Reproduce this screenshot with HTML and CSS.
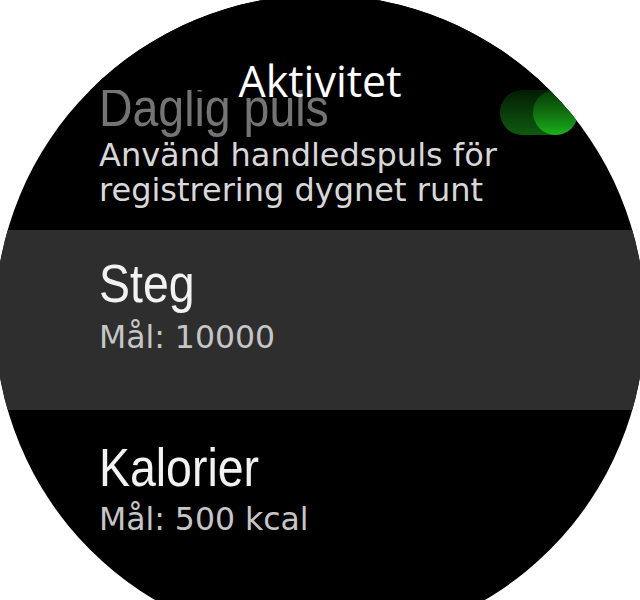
FILE: index.html
```html
<!DOCTYPE html>
<html lang="sv">
<head>
<meta charset="utf-8">
<title>Aktivitet</title>
<link rel="stylesheet" href="styles.css">
</head>
<body>
<div class="watch">
  <header class="header">
    <h1 class="title">Aktivitet</h1>
  </header>
  <ul class="list">
    <li class="item item-first">
      <div class="item-text">
        <div class="item-name item-name-faded"><span class="narrow">Daglig puls</span></div>
        <div class="item-desc">Använd handledspuls för<br>registrering dygnet runt</div>
      </div>
      <div class="toggle"><span class="toggle-knob"></span></div>
    </li>
    <li class="item item-selected">
      <div class="item-text">
        <div class="item-name"><span class="narrow">Steg</span></div>
        <div class="item-sub">Mål: 10000</div>
      </div>
    </li>
    <li class="item">
      <div class="item-text">
        <div class="item-name"><span class="narrow">Kalorier</span></div>
        <div class="item-sub">Mål: 500 kcal</div>
      </div>
    </li>
  </ul>
</div>
</body>
</html>
```

FILE: styles.css
```css
html, body {
  margin: 0;
  padding: 0;
  width: 640px;
  height: 600px;
  overflow: hidden;
  background: #ffffff;
}

.watch {
  width: 650px;
  height: 650px;
  margin: -5px 0 0 -5px;
  border-radius: 50%;
  background: #000000;
  overflow: hidden;
}

.header {
  position: relative;
  z-index: 2;
  height: 95px;
  background: #000000;
}

.title {
  margin: 0;
  padding-top: 64px;
  font-family: "Open Sans", "Noto Sans", sans-serif;
  font-weight: 400;
  font-size: 43px;
  line-height: 43px;
  color: #ffffff;
  text-align: center;
}

.list {
  list-style: none;
  margin: -40px 0 0 0;
  padding: 0;
}

.item {
  display: flex;
  align-items: flex-start;
  height: 180px;
  box-sizing: border-box;
  padding: 30px 0 0 104px;
}

.item-selected {
  background: #2e2e2e;
  padding-top: 26px;
}

.item-text {
  flex: 1;
}

.item-name {
  font-family: "Liberation Sans", Arial, sans-serif;
  font-size: 54px;
  line-height: 54px;
  color: #f2f2f2;
  white-space: nowrap;
}

.narrow {
  display: inline-block;
  transform: scaleX(0.86);
  transform-origin: left center;
}

.item-name-faded {
  color: #747474;
}

.item-desc {
  margin-top: 4px;
  font-family: "DejaVu Sans", sans-serif;
  font-size: 32px;
  line-height: 35px;
  color: #d8d8d8;
}

.item-sub {
  margin-top: 8px;
  font-family: "DejaVu Sans", sans-serif;
  font-size: 31.5px;
  line-height: 35px;
  color: #c6c6c6;
}

.item-selected .item-sub {
  margin-top: 10px;
}

.toggle {
  display: flex;
  justify-content: flex-end;
  width: 78px;
  height: 45px;
  margin: 10px 67px 0 0;
  border-radius: 23px;
  background: linear-gradient(#031c03, #0a3c0a 50%, #0e5a0e);
}

.toggle-knob {
  width: 45px;
  height: 45px;
  border-radius: 50%;
  background: linear-gradient(#073a07, #0f700f 50%, #1cb01c);
}
```
